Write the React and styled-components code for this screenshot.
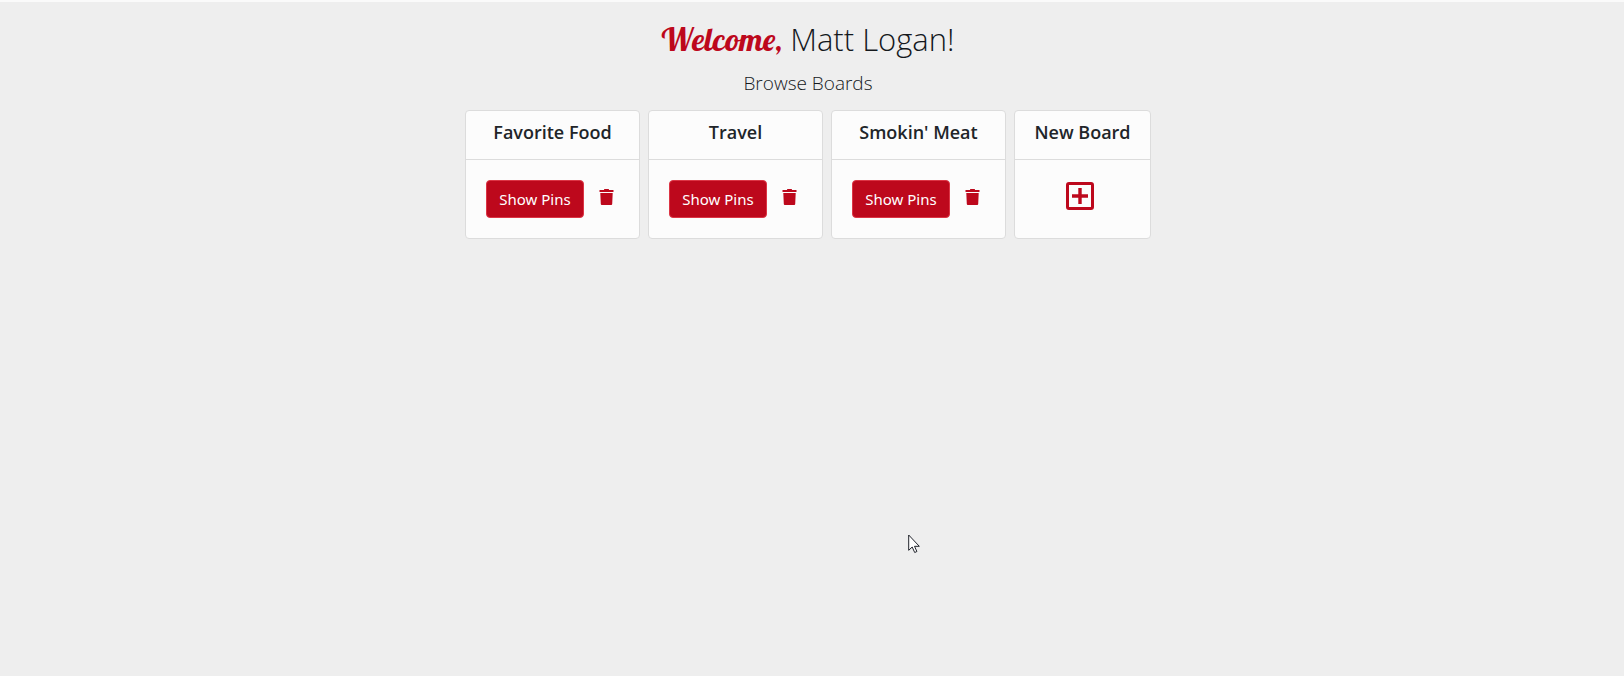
import React from "react";
import styled, { createGlobalStyle } from "styled-components";

const GlobalStyle = createGlobalStyle`
  *, *::before, *::after { box-sizing: border-box; }
  body {
    margin: 0;
    background: #eeeeee;
    color: #212529;
    font-family: "Open Sans", "Noto Sans", sans-serif;
    font-size: 16px;
    line-height: 24px;
  }
`;

const Page = styled.main`
  min-height: 100vh;
  border-top: 2px solid #fafafa;
  padding: 19px 8px 19px 0;
  display: flex;
  flex-direction: column;
  align-items: center;
`;

const Title = styled.h1`
  margin: 0;
  color: #14181c;
  font-size: 31px;
  font-weight: 300;
  line-height: 36px;
`;

const Greeting = styled.span`
  color: #bd081c;
  font-family: Lobster, "Liberation Serif", serif;
  font-size: 32px;
  font-weight: 400;
`;

const Subtitle = styled.h2`
  margin: 12px 0 13px;
  color: #14181c;
  font-size: 19px;
  font-weight: 300;
  line-height: 28px;
`;

const BoardList = styled.section`
  display: flex;
  flex-wrap: wrap;
  justify-content: center;
  gap: 8px;
`;

const Card = styled.article`
  display: flex;
  flex-direction: column;
  min-width: ${(p) => (p.$compact ? 137 : 175)}px;
  border: 1px solid #dcdcdc;
  border-radius: 4px;
  background: #fcfcfc;
`;

const CardTitle = styled.h3`
  margin: 0;
  padding: 9px 16px 14px;
  border-bottom: 1px solid #dcdcdc;
  font-size: 18px;
  font-weight: 600;
  line-height: 25px;
  text-align: center;
`;

const CardBody = styled.div`
  display: flex;
  justify-content: ${(p) => (p.$centered ? "center" : "flex-start")};
  height: 78px;
  padding: 20px ${(p) => (p.$centered ? 26 : 20)}px 20px 20px;
`;

const PinsButton = styled.button`
  width: 98px;
  height: 38px;
  padding: 0;
  border: 1px solid #dc3545;
  border-radius: 4px;
  background: #bd081c;
  color: #ffffff;
  font: 400 15px/24px "Noto Sans", sans-serif;
  white-space: nowrap;
`;

const IconButton = styled.button`
  display: block;
  height: ${(p) => (p.$large ? 32 : 34)}px;
  padding: 0;
  border: 0;
  background: transparent;
  color: #bd081c;
  margin-left: ${(p) => p.$indent || 0}px;

  svg { display: block; }
`;

const Pointer = styled.svg`
  position: absolute;
  left: 908px;
  top: 534px;
  pointer-events: none;
`;

const TrashIcon = () => (
  <svg width="15" height="16" viewBox="0 0 15 16" fill="currentColor" aria-hidden="true">
    <path d="M.5 1H5V.5L5.5 0h4l.5.5V1h4.5v2H.5zM1.3 4h12.4l-.5 11a1 1 0 0 1-1 1H2.8a1 1 0 0 1-1-1z" />
  </svg>
);

const PlusIcon = () => (
  <svg width="28" height="28" viewBox="0 0 28 28" fill="none" stroke="currentColor" strokeWidth="3" aria-hidden="true">
    <rect x="1.5" y="1.5" width="25" height="25" rx="1.5" />
    <path d="M6 14h16M14 6v16" strokeWidth="3.4" />
  </svg>
);

const boards = ["Favorite Food", "Travel", "Smokin' Meat"];

export default function App() {
  return (
    <>
      <GlobalStyle />
      <Page>
        <Title>
          <Greeting>Welcome,</Greeting> Matt Logan!
        </Title>
        <Subtitle>Browse Boards</Subtitle>
        <BoardList>
          {boards.map((name) => (
            <Card key={name}>
              <CardTitle>{name}</CardTitle>
              <CardBody>
                <PinsButton type="button">Show Pins</PinsButton>
                <IconButton type="button" $indent={15} aria-label={`Delete ${name}`}>
                  <TrashIcon />
                </IconButton>
              </CardBody>
            </Card>
          ))}
          <Card $compact>
            <CardTitle>New Board</CardTitle>
            <CardBody $centered>
              <IconButton type="button" $large aria-label="Create board">
                <PlusIcon />
              </IconButton>
            </CardBody>
          </Card>
        </BoardList>
      </Page>
      <Pointer width="13" height="20" viewBox="0 0 13 20" aria-hidden="true">
        <path d="M.7 1v15.3l3.5-3.3 2.5 5.5 2.2-1-2.4-5.2h4.8z" fill="#fff" stroke="#20232b" />
      </Pointer>
    </>
  );
}
